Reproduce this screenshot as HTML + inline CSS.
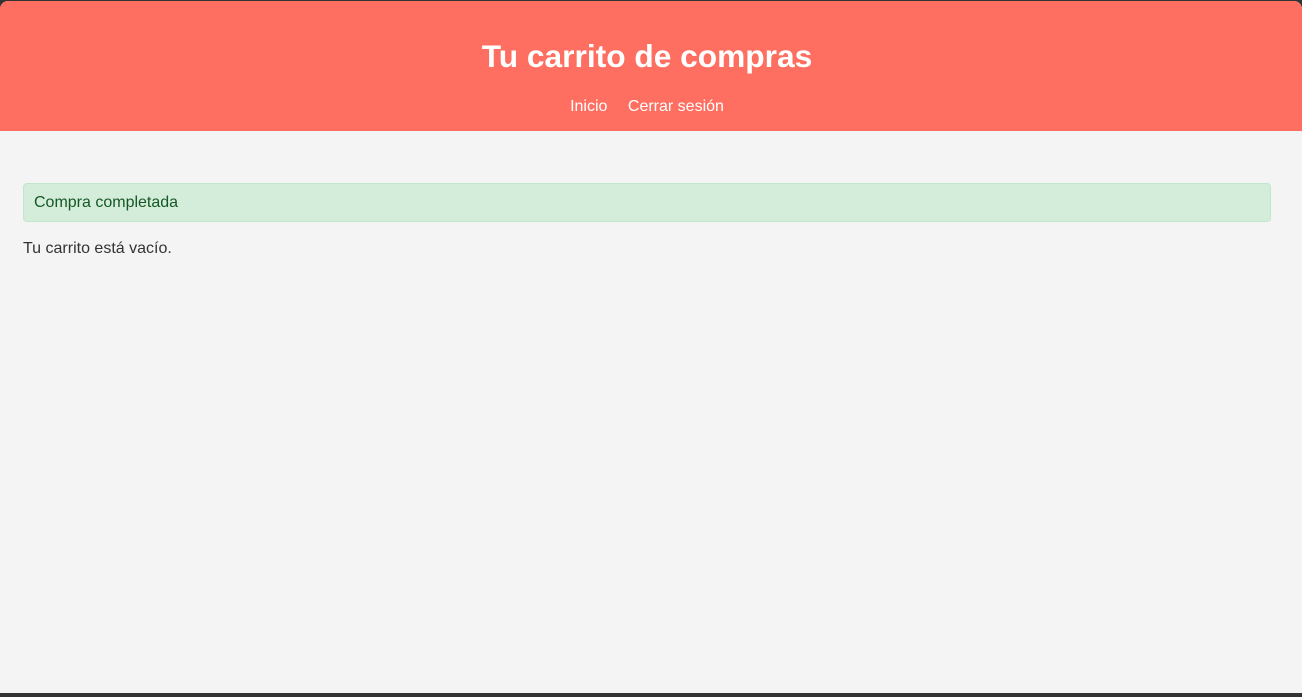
<!DOCTYPE html>
<html><head><meta charset="utf-8"><style>
html,body{margin:0;padding:0;width:1302px;height:697px;overflow:hidden;background:#333;}
.page{position:absolute;left:0;top:1px;width:1302px;height:692px;background:#f4f4f4;border-radius:8px 8px 0 0;overflow:hidden;font-family:"Liberation Sans",Arial,sans-serif;}
header{height:130px;background:#ff6f61;color:#fff;text-align:center;padding-right:8px;}
h1{margin:0;padding-top:37px;font-size:31.7px;line-height:36px;font-weight:bold;}
nav{margin-top:23px;font-size:16px;line-height:20px;}
nav a{color:#fff;text-decoration:none;margin:0 8px;}
.alert{position:absolute;left:23px;top:182px;height:37px;background:#d4edda;border:1px solid #c3e6cb;border-radius:4px;color:#155724;font-size:16px;line-height:38px;padding-left:10px;width:1236px;}
p{position:absolute;left:23px;top:238px;margin:0;font-size:16px;line-height:20px;color:#333;}
</style></head><body><div class="page">
<header><h1>Tu carrito de compras</h1><nav><a>Inicio</a> <a>Cerrar sesión</a></nav></header>
<div class="alert">Compra completada</div>
<p>Tu carrito está vacío.</p>
</div></body></html>
